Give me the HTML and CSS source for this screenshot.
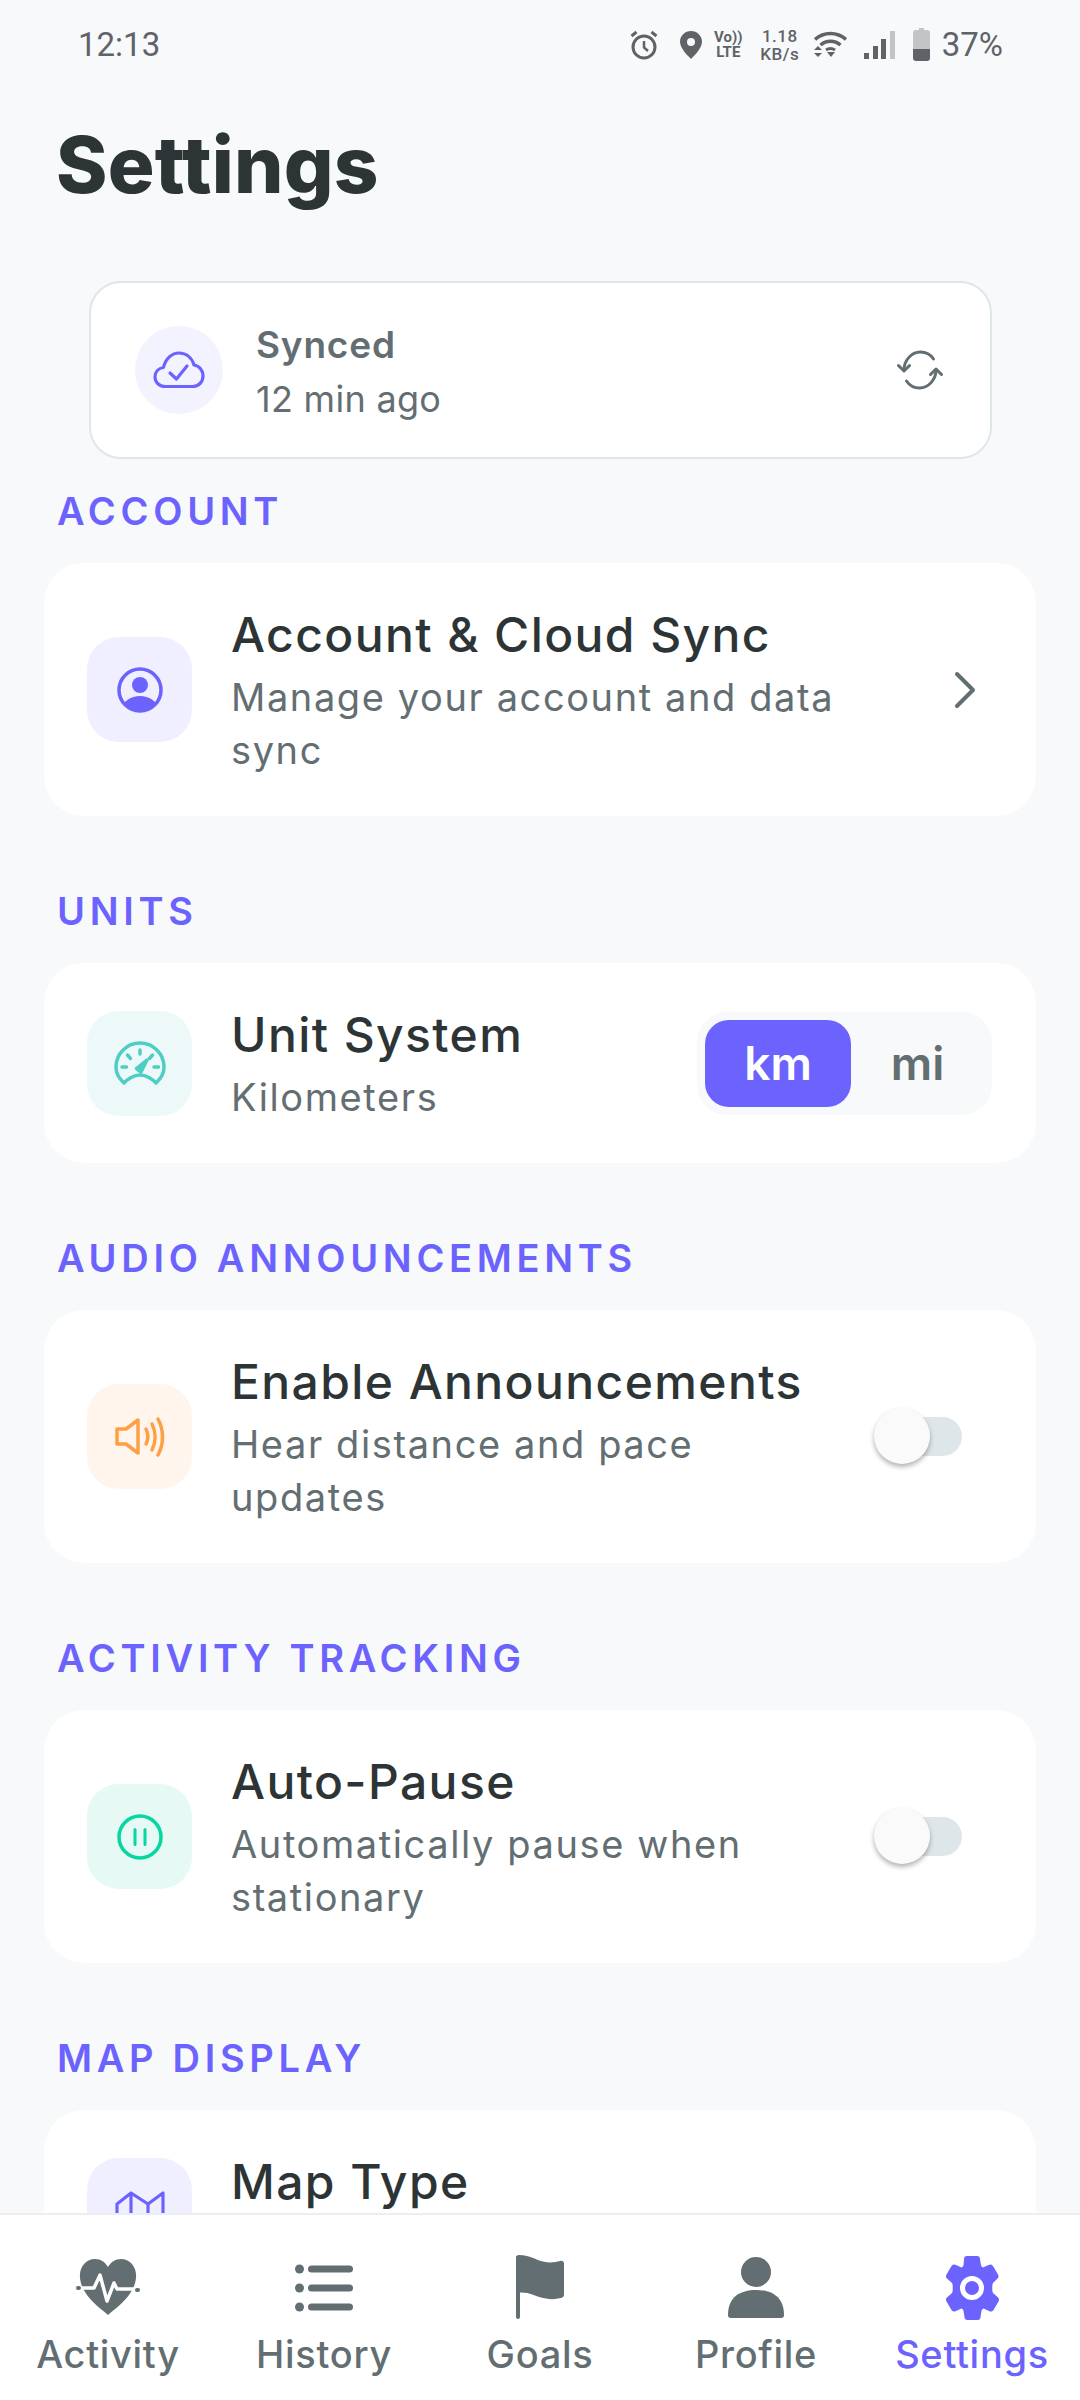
FILE: index.html
```html
<!DOCTYPE html>
<html>
    <head>
        <meta charset="utf-8">
        <title>Settings</title>
        <link rel="stylesheet" href="styles.css">
    </head>
    <body>
        <div id="screen">
            <div class="status-bar">
                <span class="clock">12:13</span>
                <div class="status-icons">
                    <svg class="st-alarm" viewBox="0 0 28 30" fill="none" stroke="#5f6368" stroke-width="3"><circle cx="14" cy="17" r="11"/><path d="M14 11v6.500l4 3.500" stroke-width="2.500"/><path d="M1.500 6l5-4M26.500 6l-5-4"/></svg>
                    <svg class="st-pin" viewBox="0 0 22 28"><path fill="#5f6368" fill-rule="evenodd" d="M11 0c6.100 0 11 4.800 11 10.800C22 17 15 24 11 28 7 24 0 17 0 10.800 0 4.800 4.900 0 11 0zm0 7a4 4 0 1 0 0 8 4 4 0 0 0 0-8z"/></svg>
                    <div class="st-lte"><span>Vo))</span><span>LTE</span></div>
                    <div class="st-speed"><span>1.18</span><span>KB/s</span></div>
                    <svg class="st-wifi" viewBox="0 0 33 28" fill="none" stroke="#5f6368" stroke-width="3.500"><path d="M1 8.500c9-8 22-8 31 0"/><path d="M6.500 14c6-5 14-5 20 0"/><path d="M12 19c3-2 6-2 9 0" stroke-width="3"/><path fill="#5f6368" stroke="none" d="M4 15l4 4H0zM0 22h8l-4 4zM13 21h8l-4 5z"/></svg>
                    <svg class="st-signal" viewBox="0 0 31 28"><rect x="0" y="22" width="5" height="6" fill="#5f6368"/><rect x="9" y="15" width="5" height="13" fill="#5f6368"/><rect x="17" y="8" width="5" height="20" fill="#5f6368"/><rect x="26" y="0" width="5" height="28" fill="#c2c4c5"/></svg>
                    <svg class="st-battery" viewBox="0 0 17 33"><path fill="#c2c4c5" d="M6 0h5v2h3a3 3 0 0 1 3 3v16H0V5a3 3 0 0 1 3-3h3z"/><path fill="#5f6368" d="M0 21h17v9a3 3 0 0 1-3 3H3a3 3 0 0 1-3-3z"/></svg>
                    <span class="percent">37%</span>
                </div>
            </div>

            <div class="content">
                <h1 class="page-title">Settings</h1>

                <div class="sync-card">
                    <div class="sync-icon">
                        <svg width="52" height="38" viewBox="0 0 52 38" fill="none" stroke="#6c63ff" stroke-width="3.200" stroke-linecap="round" stroke-linejoin="round"><path d="M12 35.500C6 35.500 2 31 2 26c0-5 3.500-8.800 8.500-9.500C12.500 7.500 19 2 26 2c7.500 0 13 5 15 12 5.500.8 9 5.500 9 11 0 6-4.500 10.500-10.500 10.500z"/><path d="M17 22l6.500 6L34 15"/></svg>
                    </div>
                    <div class="sync-text">
                        <div class="sync-title">Synced</div>
                        <div class="sync-time">12 min ago</div>
                    </div>
                    <svg class="sync-refresh" width="46" height="40" viewBox="0 0 46 40" fill="none" stroke="#636e72" stroke-width="3" stroke-linecap="round" stroke-linejoin="round"><path d="M7 20C7 11 14 2 23.500 2c5.500 0 10 2.500 13 7"/><path d="M39 20c0 9-7 18-16.500 18-5.500 0-10-2.500-13-7"/><path d="M1.500 15.500L7 21l5.500-5.500"/><path d="M33.500 24.500L39 19l5.500 5.500"/></svg>
                </div>

                <h2 class="section-label">ACCOUNT</h2>
                <div class="card">
                    <div class="tile tile-purple">
                        <svg width="46" height="46" viewBox="0 0 46 46"><defs><clipPath id="personClip"><circle cx="23" cy="23" r="20"/></clipPath></defs><circle cx="23" cy="23" r="21" fill="none" stroke="#6c63ff" stroke-width="3.500"/><circle cx="23" cy="18" r="8" fill="#6c63ff"/><ellipse cx="23" cy="41" rx="17" ry="12" fill="#6c63ff" clip-path="url(#personClip)"/></svg>
                    </div>
                    <div class="card-text">
                        <div class="card-title">Account &amp; Cloud Sync</div>
                        <div class="card-sub">Manage your account and data sync</div>
                    </div>
                    <svg class="chevron" width="24" height="38" viewBox="0 0 24 38" fill="none" stroke="#636e72" stroke-width="4" stroke-linecap="round" stroke-linejoin="round"><path d="M4 3l16 16L4 35"/></svg>
                </div>

                <h2 class="section-label">UNITS</h2>
                <div class="card">
                    <div class="tile tile-teal">
                        <svg width="52" height="44" viewBox="0 0 52 44" fill="none" stroke="#4ecdc4" stroke-width="3.500" stroke-linecap="round" stroke-linejoin="round"><path d="M10 42C5 37.500 2 32 2 26 2 12.500 13 2 26 2s24 10.500 24 24c0 6-3 11.500-8 16-3-3.500-9.500-8-16-8s-13 4.500-16 8z"/><path d="M26 9v4M13.500 14l3 3.500M38.500 14l-3 3.500M8 26h4.500M40 26h4.500"/><path d="M22.500 27.500L33 19l-6 12z" fill="#4ecdc4"/></svg>
                    </div>
                    <div class="card-text">
                        <div class="card-title">Unit System</div>
                        <div class="card-sub">Kilometers</div>
                    </div>
                    <div class="segment">
                        <div class="seg-item seg-active">km</div>
                        <div class="seg-item">mi</div>
                    </div>
                </div>

                <h2 class="section-label">AUDIO ANNOUNCEMENTS</h2>
                <div class="card">
                    <div class="tile tile-orange">
                        <svg width="50" height="40" viewBox="0 0 50 40" fill="none" stroke="#ff9f43" stroke-width="3.500" stroke-linecap="round" stroke-linejoin="round"><path d="M2 12h9L23 3v33L11 27H2z"/><path d="M31 12c2.500 5 2.500 10 0 15"/><path d="M37 7c4 8 4 18 0 26"/><path d="M43 2c6 11 6 25 0 36"/></svg>
                    </div>
                    <div class="card-text">
                        <div class="card-title">Enable Announcements</div>
                        <div class="card-sub">Hear distance and pace updates</div>
                    </div>
                    <div class="toggle"><div class="toggle-thumb"></div></div>
                </div>

                <h2 class="section-label">ACTIVITY TRACKING</h2>
                <div class="card">
                    <div class="tile tile-green">
                        <svg width="46" height="46" viewBox="0 0 46 46" fill="none" stroke="#06d6a0" stroke-width="3.500" stroke-linecap="round"><circle cx="23" cy="23" r="21"/><path d="M18 15.500v15M28 15.500v15" stroke-width="3"/></svg>
                    </div>
                    <div class="card-text">
                        <div class="card-title">Auto-Pause</div>
                        <div class="card-sub">Automatically pause when stationary</div>
                    </div>
                    <div class="toggle"><div class="toggle-thumb"></div></div>
                </div>

                <h2 class="section-label">MAP DISPLAY</h2>
                <div class="card">
                    <div class="tile tile-purple">
                        <svg width="50" height="40" viewBox="0 0 50 40" fill="none" stroke="#6c63ff" stroke-width="3.200" stroke-linejoin="round"><path d="M2 40V14L16 3l17 11L48 3v37"/><path d="M16 3v37M33 14v26"/></svg>
                    </div>
                    <div class="card-text">
                        <div class="card-title">Map Type</div>
                        <div class="card-sub card-sub-empty"></div>
                    </div>
                </div>
            </div>

            <div class="tab-bar">
                <div class="tab">
                    <svg class="tab-icon" viewBox="0 0 66 66"><path fill="#636e72" d="M33 60C24 52 7 41 5 23 4 12 11 4 20 4c6 0 10 3 13 8 3-5 7-8 13-8 9 0 16 8 15 19-2 18-19 29-28 37z"/><path fill="none" stroke="#fff" stroke-width="3.500" stroke-linecap="round" stroke-linejoin="round" d="M4 33h15l6-13 7 26 7-18 3 6h20"/><path fill="none" stroke="#636e72" stroke-width="4" stroke-linecap="round" d="M3 33h1M62 35h1"/></svg>
                    <span class="tab-label">Activity</span>
                </div>
                <div class="tab">
                    <svg class="tab-icon" viewBox="0 0 66 66" fill="#636e72"><circle cx="8.500" cy="14" r="4.500"/><circle cx="8.500" cy="33" r="4.500"/><circle cx="8.500" cy="52" r="4.500"/><rect x="17" y="10.500" width="45" height="7" rx="3.500"/><rect x="17" y="29.500" width="45" height="7" rx="3.500"/><rect x="17" y="48.500" width="45" height="7" rx="3.500"/></svg>
                    <span class="tab-label">History</span>
                </div>
                <div class="tab">
                    <svg class="tab-icon" viewBox="0 0 66 66" fill="#636e72"><path d="M9 2c0-1 1-2 3-2 10 0 16 4.500 24 6.500 6 1.500 12 1 17-.5 2-.5 4 .5 4 2.500v31c0 2-1 3-3 3.500-6 1.500-12 1.500-18 0-8-2-14-6-23-5.500V62a2 2 0 0 1-4 0z"/></svg>
                    <span class="tab-label">Goals</span>
                </div>
                <div class="tab">
                    <svg class="tab-icon" viewBox="0 0 66 66" fill="#636e72"><circle cx="33" cy="17" r="15"/><path d="M5 60c0-18 12-25 28-25s28 7 28 25c0 2-1 3-3 3H8c-2 0-3-1-3-3z"/></svg>
                    <span class="tab-label">Profile</span>
                </div>
                <div class="tab tab-active">
                    <svg class="tab-icon" viewBox="0 0 66 66"><path fill="#6c63ff" d="M25 4c0-2 1-3 3-3h10c2 0 3 1 3 3l1 6c0 1 1 2 2 2.500l5.500-2.500c2-1 3.500-.5 4.500 1l5 8.500c1 1.500.5 3.500-1 4.500L54 28c-1 1-1 9 0 10l4.500 4c1.500 1 2 3 1 4.500l-5 8.500c-1 1.500-2.500 2-4.500 1L44.500 53.500c-1 .5-2 1.500-2 2.500l-1 6c0 2-1 3-3 3h-10c-2 0-3-1-3-3l-1-6c0-1-1-2-2-2.500L17 56c-2 1-3.500.5-4.500-1l-5-8.500c-1-1.500-.5-3.500 1-4.500L13 38c1-1 1-9 0-10l-4.500-4c-1.500-1-2-3-1-4.500l5-8.500c1-1.500 2.500-2 4.500-1l5.500 2.500c1-.5 2-1.500 2-2.500z"/><circle cx="33" cy="33" r="9.500" fill="none" stroke="#fff" stroke-width="5"/></svg>
                    <span class="tab-label">Settings</span>
                </div>
            </div>
        </div>
    </body>
</html>
```

FILE: styles.css
```css
html, body {
    margin: 0;
    height: 100%;
}
body {
    font-family: "Inter", "Open Sans", sans-serif;
    background: #f8f9fa;
    color: #2d3436;
}
#screen {
    width: 1080px;
    height: 2400px;
    display: flex;
    flex-direction: column;
    overflow: hidden;
}

/* status bar */
.status-bar {
    height: 89px;
    flex-shrink: 0;
    display: flex;
    justify-content: space-between;
    align-items: center;
    padding: 0 77px 0 78px;
    font-family: "Roboto", sans-serif;
    color: #5f6368;
    box-sizing: border-box;
}
.clock {
    font-size: 33px;
}
.status-icons {
    display: flex;
    align-items: center;
}
.st-alarm { width: 28px; height: 30px; margin-right: 22px; }
.st-pin { width: 22px; height: 28px; margin-right: 13px; }
.st-lte, .st-speed {
    display: flex;
    flex-direction: column;
    align-items: center;
    font-weight: 700;
    font-size: 15px;
    line-height: 15px;
}
.st-lte { width: 27px; margin-right: 18px; }
.st-speed { width: 40px; margin-right: 14px; font-weight: 500; font-size: 17px; line-height: 18px; letter-spacing: .5px; }
.st-wifi { width: 33px; height: 28px; margin-right: 17px; }
.st-signal { width: 31px; height: 28px; margin-right: 18px; }
.st-battery { width: 17px; height: 33px; margin-right: 12px; }
.percent { font-size: 33px; }

/* scrolling content */
.content {
    flex: 1;
    min-height: 0;
    overflow: hidden;
    padding: 0 44px;
}
.page-title {
    margin: 0 0 0 12px;
    padding-top: 24px;
    height: 168px;
    font-size: 78px;
    font-weight: 800;
    line-height: 104px;
    letter-spacing: .2px;
}
.sync-card {
    height: 178px;
    margin: 0 44px 0 45px;
    box-sizing: border-box;
    display: flex;
    align-items: center;
    padding: 0 47px 0 44px;
    background: #fff;
    border: 2px solid #dfe6e9;
    border-radius: 32px;
}
.sync-icon {
    width: 88px;
    height: 88px;
    border-radius: 50%;
    background: #f3f2ff;
    display: flex;
    align-items: center;
    justify-content: center;
    flex-shrink: 0;
}
.sync-text {
    flex: 1;
    margin-left: 33px;
    padding-top: 3px;
}
.sync-title {
    font-size: 37px;
    font-weight: 600;
    line-height: 55px;
    letter-spacing: .8px;
    color: #636e72;
}
.sync-time {
    font-size: 36px;
    line-height: 55px;
    letter-spacing: .3px;
    color: #636e72;
}
.section-label {
    margin: 26px 0 26px 13px;
    font-size: 38px;
    font-weight: 600;
    line-height: 52px;
    letter-spacing: 4.700px;
    color: #6c63ff;
}
.card {
    display: flex;
    align-items: center;
    padding: 39px 43px;
    background: #fff;
    border-radius: 40px;
    margin-bottom: 69px;
}
.card + .section-label {
    margin-top: 0;
}
.tile {
    width: 105px;
    height: 105px;
    border-radius: 32px;
    display: flex;
    align-items: center;
    justify-content: center;
    flex-shrink: 0;
}
.tile-purple { background: #f0efff; }
.tile-teal { background: #edf9f9; }
.tile-orange { background: #fff5ec; }
.tile-green { background: #e6f9f5; }
.card-text {
    flex: 1;
    min-width: 0;
    margin-left: 39px;
    padding-top: 3px;
}
.card-title {
    font-size: 48px;
    font-weight: 500;
    line-height: 60px;
    letter-spacing: 1.400px;
}
.card-sub {
    max-width: 620px;
    margin-top: 6px;
    font-size: 38px;
    line-height: 53px;
    letter-spacing: 1.600px;
    color: #636e72;
}
.card-sub-empty {
    min-height: 53px;
}
.chevron {
    flex-shrink: 0;
    margin: 0 16px 0 0;
}

/* km / mi switch */
.segment {
    width: 295px;
    height: 103px;
    box-sizing: border-box;
    padding: 8px;
    display: flex;
    flex-shrink: 0;
    background: #f8f9fa;
    border-radius: 30px;
    margin-right: 1px;
}
.seg-item {
    flex: 1;
    display: flex;
    align-items: center;
    justify-content: center;
    font-size: 46px;
    font-weight: 600;
    color: #636e72;
    border-radius: 24px;
}
.seg-active {
    flex: 0 0 146px;
    background: #6c63ff;
    color: #fff;
}

/* switches */
.toggle {
    position: relative;
    width: 88px;
    height: 39px;
    border-radius: 20px;
    background: #dfe6e9;
    flex-shrink: 0;
    margin-right: 31px;
}
.toggle-thumb {
    position: absolute;
    left: 0;
    top: -9px;
    width: 56px;
    height: 56px;
    border-radius: 50%;
    background: #fafafa;
    box-shadow: 0 3px 5px rgba(0, 0, 0, .3);
}

/* bottom tabs */
.tab-bar {
    height: 187px;
    flex-shrink: 0;
    display: flex;
    box-sizing: border-box;
    background: #fff;
    border-top: 2px solid #eceeef;
}
.tab {
    flex: 1;
    display: flex;
    flex-direction: column;
    align-items: center;
    padding-top: 40px;
    color: #636e72;
}
.tab-active {
    color: #6c63ff;
}
.tab-icon {
    width: 66px;
    height: 66px;
}
.tab-label {
    font-size: 38px;
    font-weight: 500;
    line-height: 52px;
    letter-spacing: .7px;
    margin-top: 7px;
}
```
